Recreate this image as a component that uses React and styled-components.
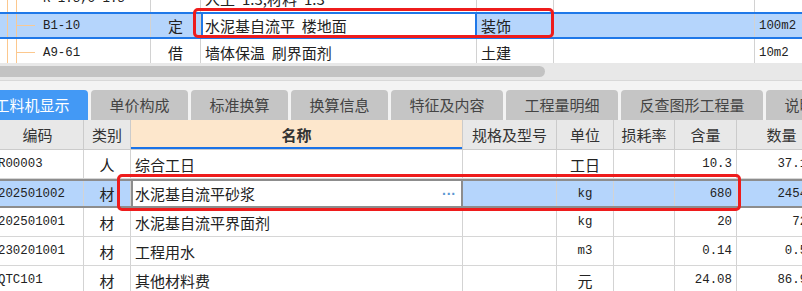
import React from 'react';
import styled, { createGlobalStyle } from 'styled-components';

const Global = createGlobalStyle`
  html, body { margin: 0; padding: 0; background: #fff; overflow: hidden; }
  body { font-family: "Noto Sans CJK SC", "Noto Sans", sans-serif; font-size: 15px; color: #222; }
`;

const MONO = `"Liberation Mono", "DejaVu Sans Mono", monospace`;

const Page = styled.div`
  width: 802px;
  height: 291px;
  overflow: hidden;
  display: flex;
  flex-direction: column;
  background: #fff;
`;

/* ---------- top tree grid ---------- */
const TopPane = styled.div`
  position: relative;
  flex: none;
  height: 63px;
  overflow: hidden;
`;

const TopRows = styled.div`
  margin-top: -15px;
  display: flex;
  flex-direction: column;
`;

const TopRow = styled.div`
  display: grid;
  grid-template-columns: 151px 50px 276px 77px 201px 47px;
  height: 27px;
  box-sizing: border-box;
  background: ${p => (p.$selected ? '#b5d5fc' : '#fff')};
  border-top: ${p => (p.$selected ? '2px solid #1f78e8' : '0')};
  border-bottom: ${p => (p.$selected ? '2px solid #1f78e8' : '0')};
`;

const TopCell = styled.div`
  display: flex;
  align-items: center;
  box-sizing: border-box;
  min-width: 0;
  overflow: hidden;
  white-space: nowrap;
  border-right: 1px solid #d2d2d2;
  padding: 0 4px;
  justify-content: ${p => (p.$center ? 'center' : 'flex-start')};
  font-family: ${p => (p.$mono ? MONO : 'inherit')};
  font-size: ${p => (p.$mono ? '12.4px' : '15px')};
  &:last-child { border-right: 0; }
`;

const EditCell = styled(TopCell)`
  background: #fff;
  border-left: 2px solid #1f78e8;
  border-right: 2px solid #1f78e8;
  padding-left: 2px;
`;

const TreeCell = styled.div`
  display: flex;
  align-items: stretch;
  box-sizing: border-box;
  border-right: 1px solid #d2d2d2;
  font-family: ${MONO};
  font-size: 12.4px;
  white-space: nowrap;
  overflow: hidden;
`;

const TreeGuide = styled.svg`
  flex: none;
  width: 40px;
  height: 100%;
`;

const TreeText = styled.span`
  display: flex;
  align-items: center;
  padding-left: 3px;
`;

const Tree = () => (
  <TreeGuide viewBox="0 0 40 27" preserveAspectRatio="none">
    <line x1="7.5" y1="0" x2="7.5" y2="27" stroke="#fcc88e" strokeWidth="1" />
    <line x1="16.5" y1="0" x2="16.5" y2="27" stroke="#fcc88e" strokeWidth="1" />
    <line x1="16.5" y1="13.5" x2="35" y2="13.5" stroke="#fcc88e" strokeWidth="1" />
  </TreeGuide>
);

const HScroll = styled.div`
  flex: none;
  height: 17px;
  background: #e8e8e8;
  display: flex;
  align-items: center;
  overflow: hidden;
`;

const Thumb = styled.div`
  width: 552px;
  height: 11px;
  margin-left: -7px;
  border-radius: 6px;
  background: #c3c3c3;
`;

const Gap = styled.div`
  flex: none;
  height: 9px;
  border-top: 1px solid #d8d8d8;
  background: #f3f3f3;
`;

/* ---------- tabs ---------- */
const TabStrip = styled.div`
  flex: none;
  height: 30px;
  background: #f3f3f3;
  overflow: hidden;
`;

const TabRow = styled.div`
  display: flex;
  gap: 3px;
  margin-left: -24px;
  height: 100%;
`;

const Tab = styled.div`
  flex: none;
  padding: 0 18.5px;
  height: 30px;
  line-height: 30px;
  border-radius: 4px 4px 0 0;
  white-space: nowrap;
  font-size: 15px;
  background: ${p => (p.$active ? '#4399f5' : '#c5c5c5')};
  color: ${p => (p.$active ? '#fff' : '#444')};
`;

/* ---------- bottom grid ---------- */
const BottomPane = styled.div`
  position: relative;
  flex: 1;
  overflow: hidden;
`;

const COLS = '92px 47px 332px 94px 57px 61px 62px 90px';

const HeadRow = styled.div`
  display: grid;
  grid-template-columns: ${COLS};
  margin-left: -8px;
  height: 30px;
  box-sizing: border-box;
  background: #e8e8e8;
  border-bottom: 1px solid #cbcbcb;
`;

const HeadCell = styled.div`
  display: flex;
  align-items: center;
  justify-content: center;
  white-space: nowrap;
  overflow: hidden;
  border-right: 1px solid #cbcbcb;
  color: #333;
  font-size: 15px;
  background: ${p => (p.$accent ? '#fde7cc' : 'transparent')};
  font-weight: ${p => (p.$accent ? 700 : 400)};
  box-shadow: ${p => (p.$accent ? 'inset 0 -2px 0 #1a73e8' : 'none')};
`;

const DataRow = styled.div`
  display: grid;
  grid-template-columns: ${COLS};
  margin-left: -8px;
  height: 29px;
  box-sizing: border-box;
  background: ${p => (p.$selected ? '#b5d5fc' : '#fff')};
  border-top: ${p => (p.$selected ? '2px solid #8d8d8d' : '0')};
  border-bottom: ${p => (p.$selected ? '2px solid #8d8d8d' : '1px solid #d6d6d6')};
`;

const Cell = styled.div`
  display: flex;
  align-items: center;
  box-sizing: border-box;
  min-width: 0;
  overflow: hidden;
  white-space: nowrap;
  border-right: 1px solid #d3d3d3;
  padding: ${p => (p.$pad ? p.$pad : '0 4px')};
  justify-content: ${p => (p.$align === 'center' ? 'center' : p.$align === 'right' ? 'flex-end' : 'flex-start')};
  font-family: ${p => (p.$mono ? MONO : 'inherit')};
  font-size: ${p => (p.$mono ? '12.4px' : '15px')};
  color: #222;
`;

const NameEdit = styled(Cell)`
  background: #fff;
  border-left: 2px solid #8d8d8d;
  border-right: 2px solid #8d8d8d;
  justify-content: space-between;
  padding: 0 5px 0 2px;
`;

const Ellipsis = styled.span`
  font-family: "Liberation Sans", sans-serif;
  color: #5b97d2;
  font-size: 14px;
  font-weight: 700;
  letter-spacing: 0;
`;

const Highlight = styled.div`
  position: absolute;
  left: ${p => p.$x}px;
  top: ${p => p.$y}px;
  width: ${p => p.$w}px;
  height: ${p => p.$h}px;
  box-sizing: border-box;
  border: 3px solid #ee1c1c;
  border-radius: 5px;
  pointer-events: none;
`;

const tabs = ['工料机显示', '单价构成', '标准换算', '换算信息', '特征及内容', '工程量明细', '反查图形工程量', '说明信息'];

const heads = ['编码', '类别', '名称', '规格及型号', '单位', '损耗率', '含量', '数量'];

const rows = [
  { code: 'R00003', type: '人', name: '综合工日', unit: '工日', mono: false, qty: '10.3', total: '37.183' },
  { code: '202501002', type: '材', name: '水泥基自流平砂浆', unit: 'kg', mono: true, qty: '680', total: '2454.8', selected: true },
  { code: '202501001', type: '材', name: '水泥基自流平界面剂', unit: 'kg', mono: true, qty: '20', total: '72.2' },
  { code: '230201001', type: '材', name: '工程用水', unit: 'm3', mono: true, qty: '0.14', total: '0.505' },
  { code: 'QTC101', type: '材', name: '其他材料费', unit: '元', mono: false, qty: '24.08', total: '86.929' },
];

export default function App() {
  return (
    <>
      <Global />
      <Page>
        <TopPane>
          <TopRows>
            <TopRow>
              <TreeCell><Tree /><TreeText>R*1.3,C*1.3</TreeText></TreeCell>
              <TopCell $center />
              <TopCell>人工*1.3,材料*1.3</TopCell>
              <TopCell />
              <TopCell />
              <TopCell $mono />
            </TopRow>
            <TopRow $selected>
              <TreeCell><Tree /><TreeText>B1-10</TreeText></TreeCell>
              <TopCell $center>定</TopCell>
              <EditCell>水泥基自流平&nbsp;&nbsp;楼地面</EditCell>
              <TopCell>装饰</TopCell>
              <TopCell />
              <TopCell $mono>100m2</TopCell>
            </TopRow>
            <TopRow>
              <TreeCell><Tree /><TreeText>A9-61</TreeText></TreeCell>
              <TopCell $center>借</TopCell>
              <TopCell>墙体保温&nbsp;&nbsp;刷界面剂</TopCell>
              <TopCell>土建</TopCell>
              <TopCell />
              <TopCell $mono>10m2</TopCell>
            </TopRow>
          </TopRows>
          <Highlight $x={193} $y={8} $w={361} $h={30} />
        </TopPane>
        <HScroll><Thumb /></HScroll>
        <Gap />
        <TabStrip>
          <TabRow>
            {tabs.map((t, i) => (
              <Tab key={t} $active={i === 0}>{t}</Tab>
            ))}
          </TabRow>
        </TabStrip>
        <BottomPane>
          <HeadRow>
            {heads.map(h => (
              <HeadCell key={h} $accent={h === '名称'}>{h}</HeadCell>
            ))}
          </HeadRow>
          {rows.map(r => (
            <DataRow key={r.code} $selected={r.selected}>
              <Cell $mono $pad="0 0 0 6px">{r.code}</Cell>
              <Cell $align="center">{r.type}</Cell>
              {r.selected ? (
                <NameEdit>
                  <span>{r.name}</span>
                  <Ellipsis>···</Ellipsis>
                </NameEdit>
              ) : (
                <Cell>{r.name}</Cell>
              )}
              <Cell />
              <Cell $align="center" $mono={r.mono}>{r.unit}</Cell>
              <Cell />
              <Cell $align="right" $mono>{r.qty}</Cell>
              <Cell $align="right" $mono>{r.total}</Cell>
            </DataRow>
          ))}
          <Highlight $x={117} $y={54} $w={624} $h={37} />
        </BottomPane>
      </Page>
    </>
  );
}
